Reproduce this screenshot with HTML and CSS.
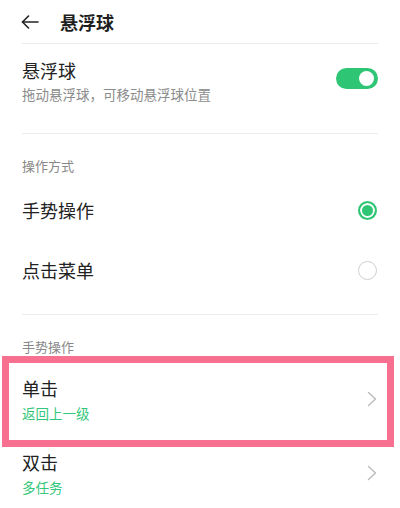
FILE: index.html
```html
<!DOCTYPE html>
<html lang="zh-CN">
<head>
<meta charset="utf-8">
<title>悬浮球</title>
<link rel="stylesheet" href="styles.css">
</head>
<body>
<div class="page">
  <header class="topbar">
    <svg class="back" width="18" height="14" viewBox="0 0 18 14" fill="none" stroke="#222" stroke-width="1.6" stroke-linecap="round" stroke-linejoin="round">
      <line x1="1.5" y1="7" x2="17" y2="7"/>
      <polyline points="7.5,1 1.5,7 7.5,13"/>
    </svg>
    <h1 class="title">悬浮球</h1>
  </header>
  <div class="divider"></div>

  <div class="row row-toggle">
    <div class="text">
      <div class="row-title">悬浮球</div>
      <div class="row-sub">拖动悬浮球，可移动悬浮球位置</div>
    </div>
    <div class="toggle"><span class="knob"></span></div>
  </div>
  <div class="divider"></div>

  <div class="section-head first">操作方式</div>
  <div class="row row-radio">
    <div class="row-title">手势操作</div>
    <span class="radio checked"></span>
  </div>
  <div class="row row-radio">
    <div class="row-title">点击菜单</div>
    <span class="radio"></span>
  </div>
  <div class="divider gap"></div>

  <div class="section-head second">手势操作</div>
  <div class="row row-nav highlighted">
    <div class="text">
      <div class="row-title">单击</div>
      <div class="row-sub green">返回上一级</div>
    </div>
    <svg class="chev" width="10" height="16" viewBox="0 0 10 16" fill="none" stroke="#bdbdbd" stroke-width="1.5" stroke-linecap="round" stroke-linejoin="round"><polyline points="1.5,1.5 8.5,8 1.5,14.5"/></svg>
  </div>
  <div class="row row-nav">
    <div class="text">
      <div class="row-title">双击</div>
      <div class="row-sub green">多任务</div>
    </div>
    <svg class="chev" width="10" height="16" viewBox="0 0 10 16" fill="none" stroke="#bdbdbd" stroke-width="1.5" stroke-linecap="round" stroke-linejoin="round"><polyline points="1.5,1.5 8.5,8 1.5,14.5"/></svg>
  </div>
</div>
</body>
</html>
```
FILE: styles.css
```css
* { box-sizing: border-box; }
html, body {
  margin: 0;
  padding: 0;
  background: #fff;
  overflow: hidden;
}
body {
  font-family: "Noto Sans CJK SC", "Noto Sans", sans-serif;
  color: #222;
}
.page {
  width: 400px;
  height: 508px;
  padding: 0 22px;
  overflow: hidden;
}
.topbar {
  height: 43px;
  display: flex;
  align-items: center;
}
.back {
  margin-left: -1px;
  flex: none;
}
.title {
  margin: 0 0 0 21px;
  font-size: 18px;
  line-height: 24px;
  font-weight: 700;
  color: #1f1f1f;
}
.divider {
  height: 1px;
  background: #ececec;
}
.divider.gap {
  margin-top: 14px;
}
.row {
  display: flex;
  align-items: center;
  justify-content: space-between;
  position: relative;
}
.text {
  display: flex;
  flex-direction: column;
  gap: 3px;
}
.row-title {
  font-size: 18px;
  line-height: 24px;
  color: #222;
}
.row-sub {
  font-size: 13.5px;
  line-height: 18px;
  color: #8c8c8c;
}
.row-sub.green {
  color: #34c77b;
}
.row-toggle {
  padding: 14px 0 30px;
}
.toggle {
  width: 42px;
  height: 21px;
  border-radius: 11px;
  background: #2ec675;
  display: flex;
  align-items: center;
  justify-content: flex-end;
  padding-right: 4px;
  margin-top: -4px;
  flex: none;
}
.knob {
  width: 15px;
  height: 15px;
  border-radius: 50%;
  background: #fff;
}
.section-head {
  font-size: 13px;
  line-height: 18px;
  color: #888;
}
.section-head.first {
  padding: 23px 0 5px;
}
.section-head.second {
  padding: 23px 0 6px;
}
.row-radio {
  height: 60px;
}
.radio {
  width: 19px;
  height: 19px;
  border-radius: 50%;
  border: 1.5px solid #cfcfcf;
  flex: none;
  margin-right: 1px;
}
.radio.checked {
  border: 2px solid #2ec675;
  background: #2ec675;
  box-shadow: inset 0 0 0 2px #fff;
}
.row-nav {
  height: 74px;
  padding: 14px 0;
  gap: 4px;
}
.row-nav .text {
  gap: 4px;
}
.chev {
  flex: none;
  margin-right: 1px;
}
.highlighted::after {
  content: "";
  position: absolute;
  left: -20px;
  right: -16px;
  top: -6px;
  bottom: -11px;
  border: 7px solid #f7708f;
  pointer-events: none;
}
```
